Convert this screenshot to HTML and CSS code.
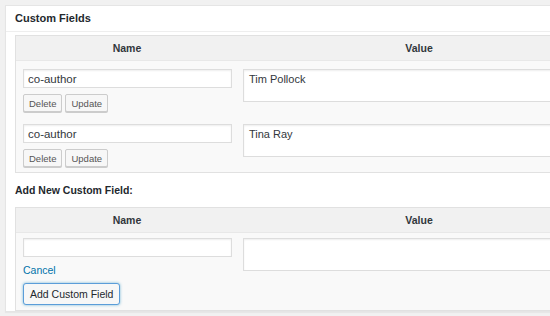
FILE: index.html
```html
<!DOCTYPE html>
<html>
<head>
<meta charset="utf-8">
<link rel="stylesheet" href="styles.css">
</head>
<body>
<div class="viewport">
<div class="postbox">
  <h2 class="hndle">Custom Fields</h2>
  <div class="inside">
    <div class="cf-table">
      <div class="cf-head">
        <div class="th">Name</div>
        <div class="th">Value</div>
      </div>
      <div class="cf-row">
        <div class="cell-name">
          <input class="field" type="text" value="co-author">
          <div class="actions">
            <button class="btn">Delete</button>
            <button class="btn">Update</button>
          </div>
        </div>
        <div class="cell-value">
          <textarea class="area">Tim Pollock</textarea>
        </div>
      </div>
      <div class="cf-row last">
        <div class="cell-name">
          <input class="field" type="text" value="co-author">
          <div class="actions">
            <button class="btn">Delete</button>
            <button class="btn">Update</button>
          </div>
        </div>
        <div class="cell-value">
          <textarea class="area">Tina Ray</textarea>
        </div>
      </div>
    </div>

    <p class="add-title">Add New Custom Field:</p>

    <div class="cf-table">
      <div class="cf-head">
        <div class="th">Name</div>
        <div class="th">Value</div>
      </div>
      <div class="cf-row new">
        <div class="cell-name">
          <input class="field" type="text" value="">
          <a class="cancel" href="#">Cancel</a>
          <button class="btn btn-primary">Add Custom Field</button>
        </div>
        <div class="cell-value">
          <textarea class="area"></textarea>
        </div>
      </div>
    </div>
  </div>
</div>
</div>
</body>
</html>
```
FILE: styles.css
```css
html, body {
  margin: 0;
  padding: 0;
}
body {
  background: #f1f1f1;
  font-family: "Liberation Sans", Arial, sans-serif;
  font-size: 11px;
  color: #23282d;
  overflow: hidden;
}
.viewport {
  width: 550px;
  height: 316px;
  overflow: hidden;
}
.postbox {
  margin: 5px 0 0 5px;
  width: 606px;
  background: #fff;
  border: 1px solid #e5e5e5;
  box-shadow: 0 1px 1px rgba(0,0,0,.04);
}
.hndle {
  margin: 0;
  height: 25px;
  line-height: 25px;
  padding: 0 9px;
  font-size: 11px;
  font-weight: bold;
  border-bottom: 1px solid #eee;
}
.inside {
  padding: 3px 0 0 9px;
}
.cf-table {
  width: 584px;
  border: 1px solid #e1e1e1;
  background: #f9f9f9;
}
.cf-head {
  display: grid;
  grid-template-columns: 222px 1fr;
  background: #f1f1f1;
  height: 24px;
  border-bottom: 1px solid #e8e8e8;
}
.th {
  text-align: center;
  line-height: 24px;
  font-weight: bold;
  font-size: 10.5px;
  color: #32373c;
}
.cf-row {
  display: grid;
  grid-template-columns: 222px 1fr;
  padding: 8px 0 4px;
}
.cf-row.last {
  padding-bottom: 5px;
}
.cf-row.new {
  padding: 5px 0 5px;
}
.cell-name {
  padding-left: 7px;
  display: flex;
  flex-direction: column;
  align-items: flex-start;
}
.cell-value {
  padding-left: 5px;
}
.field {
  box-sizing: border-box;
  width: 209px;
  height: 19px;
  margin: 0;
  padding: 0 4px;
  border: 1px solid #ddd;
  background: #fff;
  box-shadow: inset 0 1px 2px rgba(0,0,0,.07);
  font-family: inherit;
  font-size: 11.5px;
  color: #32373c;
  outline: none;
}
.area {
  display: block;
  box-sizing: border-box;
  width: 360px;
  height: 33px;
  margin: 0;
  padding: 3px 5px;
  border: 1px solid #ddd;
  background: #fff;
  box-shadow: inset 0 1px 2px rgba(0,0,0,.07);
  font-family: inherit;
  font-size: 11px;
  color: #32373c;
  resize: none;
  outline: none;
}
.actions {
  display: flex;
  gap: 3px;
  margin-top: 6px;
}
.btn {
  box-sizing: border-box;
  height: 18px;
  padding: 0 5px;
  margin: 0;
  border: 1px solid #ccc;
  border-radius: 2px;
  background: #f7f7f7;
  box-shadow: 0 1px 0 #ccc;
  font-family: inherit;
  font-size: 9.5px;
  color: #555;
}
.cancel {
  margin-top: 7px;
  color: #0073aa;
  text-decoration: none;
  font-size: 10.5px;
  line-height: 13px;
}
.btn-primary {
  margin-top: 6px;
  height: 22px;
  padding: 0 6px;
  font-size: 10.5px;
  color: #23282d;
  border-color: #5b9dd9;
  border-radius: 3px;
  box-shadow: 0 0 3px rgba(30,140,190,.6);
}
.add-title {
  margin: 0;
  height: 34px;
  line-height: 34px;
  font-weight: bold;
  font-size: 10.5px;
  padding-left: 0;
}
```
